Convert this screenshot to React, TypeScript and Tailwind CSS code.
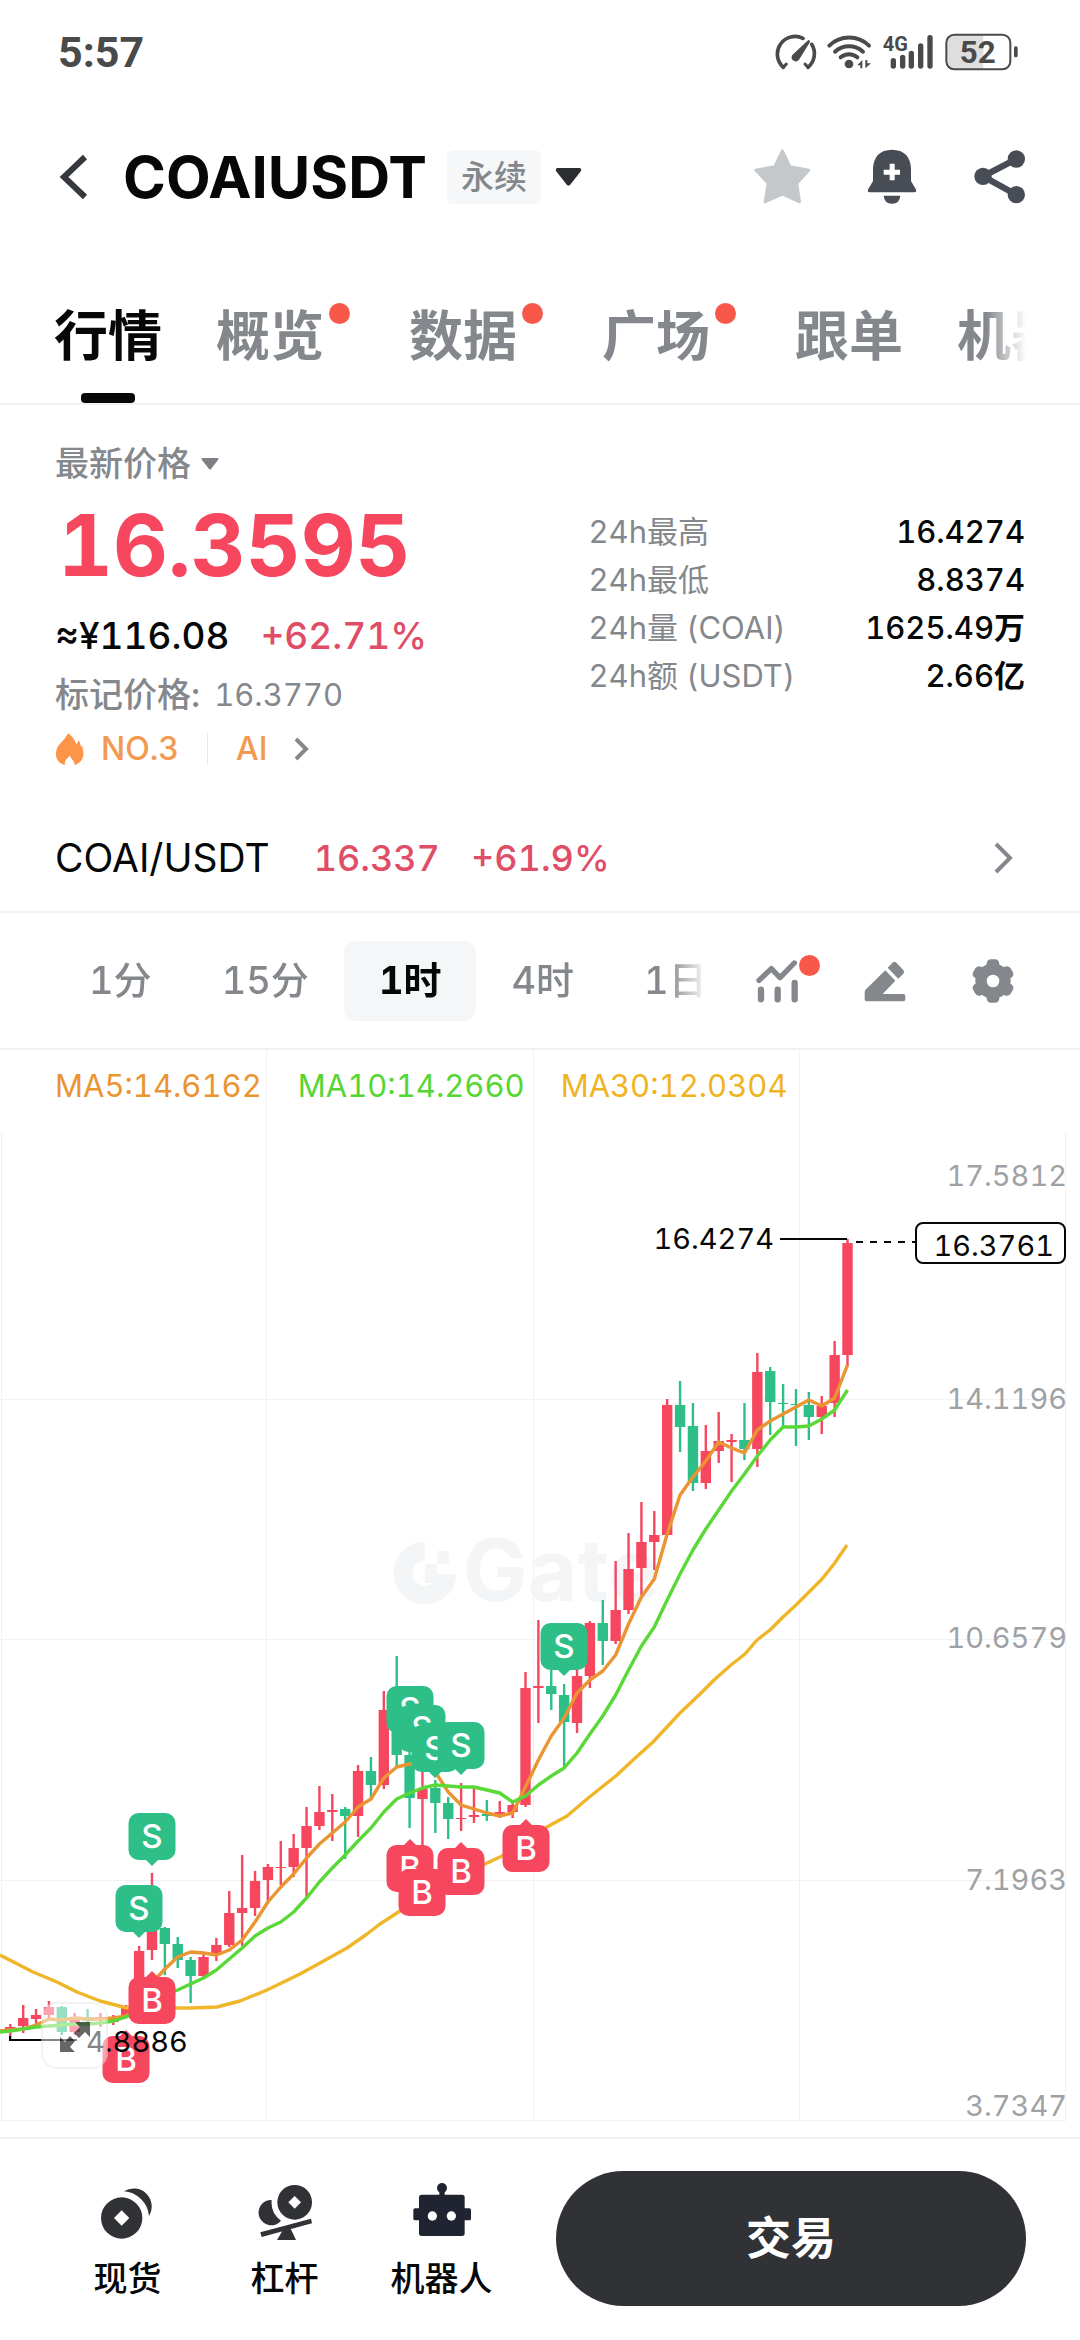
import { useState } from "react";
import clsx from "clsx";

const tabs = [
  { label: "行情", dot: false },
  { label: "概览", dot: true },
  { label: "数据", dot: true },
  { label: "广场", dot: true },
  { label: "跟单", dot: false },
  { label: "机器人", dot: false },
];

const stats = [
  { label: "24h最高", value: "16.4274", unit: "" },
  { label: "24h最低", value: "8.8374", unit: "" },
  { label: "24h量 (COAI)", value: "1625.49", unit: "万" },
  { label: "24h额 (USDT)", value: "2.66", unit: "亿" },
];

const intervals = ["1分", "15分", "1时", "4时", "1日"];

const UP = "#f6475e";
const DOWN = "#2dbf87";

// [up, high, body top, body bottom, low] in chart units
const candles: [number, number, number, number, number][] = [
  [1, 974, 977, 979, 989], [1, 955, 968, 976, 983], [1, 959, 965, 969, 974], [1, 951, 957, 965, 969],
  [0, 956, 957, 982, 985], [1, 963, 967, 982, 985], [0, 959, 967, 971, 975], [1, 963, 967, 969, 977],
  [1, 965, 967, 972, 975], [1, 955, 958, 967, 968], [1, 896, 901, 943, 947], [1, 823, 877, 900, 910],
  [0, 877, 878, 894, 925], [0, 887, 894, 910, 918], [0, 907, 910, 926, 953], [1, 904, 907, 926, 927],
  [1, 888, 895, 905, 911], [1, 841, 863, 895, 897], [1, 805, 858, 863, 896], [1, 821, 831, 858, 866],
  [1, 814, 817, 830, 851], [1, 791, 817, 818, 835], [1, 784, 798, 817, 827], [1, 757, 776, 798, 847],
  [1, 736, 762, 776, 780], [1, 744, 760, 762, 791], [0, 757, 759, 766, 809], [1, 715, 721, 766, 787],
  [0, 707, 721, 735, 748], [1, 641, 660, 735, 739], [0, 606, 643, 705, 717], [0, 700, 705, 748, 778],
  [1, 720, 739, 749, 797], [0, 730, 738, 753, 783], [0, 747, 753, 769, 789], [1, 733, 768, 769, 781],
  [1, 737, 765, 767, 773], [0, 750, 764, 766, 771], [1, 751, 762, 764, 768], [1, 752, 755, 762, 768],
  [1, 622, 638, 755, 757], [1, 570, 636, 638, 673], [0, 617, 636, 644, 660], [0, 634, 645, 672, 717],
  [1, 617, 626, 673, 683], [1, 571, 573, 626, 638], [0, 550, 573, 591, 615], [1, 511, 560, 591, 594],
  [1, 483, 519, 560, 564], [1, 452, 492, 518, 545], [1, 461, 485, 492, 520], [1, 349, 355, 485, 485],
  [0, 331, 355, 377, 402], [0, 353, 376, 433, 441], [1, 375, 401, 433, 439], [1, 362, 391, 401, 413],
  [1, 384, 390, 392, 432], [0, 353, 390, 399, 410], [1, 303, 322, 399, 417], [0, 317, 321, 352, 385],
  [0, 334, 353, 354, 377], [0, 339, 354, 355, 396], [0, 342, 355, 367, 390], [1, 346, 356, 367, 384],
  [1, 291, 305, 353, 367], [1, 189, 193, 305, 316],
];

const ma5 = [
  980, 979, 975, 969, 970, 968, 969, 969, 968, 966, 957, 933, 919, 907, 902, 903, 905, 900, 890, 872, 852, 837,
  824, 808, 794, 783, 772, 757, 749, 728, 717, 714, 713, 722, 742, 755, 759, 763, 766, 763, 737, 710, 686, 668,
  643, 630, 621, 605, 574, 547, 529, 484, 445, 427, 411, 392, 398, 403, 380, 371, 364, 357, 350, 356, 348, 315,
];

const ma10 = [
  981, 979, 977, 976, 975, 974, 974, 973, 971, 967, 960, 952, 945, 940, 934, 928, 920, 909, 898, 886, 878, 872,
  862, 848, 832, 818, 805, 791, 778, 762, 749, 743, 738, 735, 736, 737, 737, 740, 743, 752, 746, 735, 726, 718,
  703, 684, 666, 645, 620, 596, 577, 550, 524, 500, 479, 460, 441, 424, 406, 390, 377, 377, 376, 369, 360, 340,
];

const ma30 =
  "0,905 33,922 57,932 77,942 100,951 127,958 150,959 177,958 191,958 217,957 240,951 267,940 300,924 320,913 347,898 367,884 380,874 400,861 440,838 485,814 502,806 547,777 567,766 587,749 617,725 633,710 653,692 680,663 700,644 714,630 731,615 745,604 757,590 770,580 783,567 796,555 809,542 822,529 834,514 847,495";

const marks = [
  { side: "S", x: 152, y: 763 },
  { side: "S", x: 139, y: 835 },
  { side: "S", x: 410, y: 636 },
  { side: "S", x: 422, y: 655 },
  { side: "S", x: 435, y: 675 },
  { side: "S", x: 461, y: 672 },
  { side: "S", x: 564, y: 573 },
  { side: "B", x: 152, y: 927 },
  { side: "B", x: 126, y: 986 },
  { side: "B", x: 410, y: 795 },
  { side: "B", x: 461, y: 798 },
  { side: "B", x: 422, y: 819 },
  { side: "B", x: 526, y: 775 },
];

const priceAxis = [
  { label: "17.5812", y: 136 },
  { label: "14.1196", y: 359 },
  { label: "10.6579", y: 598 },
  { label: "7.1963", y: 840 },
  { label: "3.7347", y: 1066 },
];

const candleX = (i: number) => 10.3 + i * 12.88;
const toPoints = (values: number[]) => values.map((y, i) => `${candleX(i)},${y}`).join(" ");

function StatusBar() {
  return (
    <div className="flex h-[104px] items-center justify-between pl-[58px] pr-[60px] text-[#4a4a4a]">
      <span className="font-['Roboto',sans-serif] text-[43px] font-bold leading-[44px]">5:57</span>
      <svg className="h-[40px] w-[245px]" viewBox="45 62 735 120" fill="none" stroke="currentColor" strokeLinecap="round">
        <path d="M70 168 A53 53 0 0 1 129 81" strokeWidth="11" />
        <path d="M155 99 A53 53 0 0 1 144 168" strokeWidth="11" />
        <path d="M70 168 L79 158 M144 168 L135 158" strokeWidth="9" />
        <path d="M97 131 L145 86 Q151 86 150 92 L118 144 A12 12 0 1 1 97 131Z" fill="currentColor" stroke="none" />
        <path d="M208 103 A85 85 0 0 1 327 103 M225 121 A62 62 0 0 1 309 121 M242 138 A38 38 0 0 1 292 138" strokeWidth="12" />
        <circle cx="267" cy="158" r="13" fill="currentColor" stroke="none" />
        <path d="M292 162 L307 146 V171 H301 V162Z M316 171 V146 H322 V156 H333Z" fill="currentColor" stroke="none" />
        <path d="M400 148 V164 M428 138 V164 M454 126 V164 M482 104 V164 M510 79 V164" strokeWidth="16" />
        <text x="368" y="120" fill="currentColor" stroke="none" className="font-['Roboto',sans-serif] text-[60px] font-bold">4G</text>
        <path d="M582 70 H670 V174 H582 Q559 174 559 150 V94 Q559 70 582 70Z" fill="#dedede" stroke="none" />
        <rect x="559" y="70" width="192" height="104" rx="24" strokeWidth="6" />
        <rect x="762" y="105" width="11" height="33" rx="5" fill="currentColor" stroke="none" />
        <text x="653" y="155" textAnchor="middle" fill="currentColor" stroke="none" className="font-['Roboto',sans-serif] text-[94px] font-bold">52</text>
      </svg>
    </div>
  );
}

function Header() {
  return (
    <header className="flex h-[146px] items-center justify-between pl-[55px] pr-[54px]">
      <div className="flex items-center">
        <button aria-label="返回" className="mr-[32px]">
          <svg className="h-[46px] w-[36px]" viewBox="0 0 36 46" fill="none" stroke="#35383c" strokeWidth="6">
            <path d="M30 3 L9 23 L30 43" />
          </svg>
        </button>
        <button className="flex items-center text-[#060808]">
          <h1 className="text-[58px] font-bold leading-[64px]">COAIUSDT</h1>
          <span className="ml-[20px] rounded-md bg-[#f5f7f9] px-[14px] text-[33px] font-medium leading-[54px] text-[#84888c]">
            永续
          </span>
          <svg className="ml-[14px] h-[18px] w-[27px]" viewBox="0 0 27 18" fill="#2b2d30">
            <path d="M2 0 H25 Q27 1 26 3 L15 17 Q13.500 18 12 17 L1 3 Q0 1 2 0Z" />
          </svg>
        </button>
      </div>
      <div className="flex items-center gap-[55px]">
        <button aria-label="收藏">
          <svg className="h-[56px] w-[57px]" viewBox="-25 416 171 168" fill="#c4c8ca" stroke="#c4c8ca" strokeWidth="8" strokeLinejoin="round">
            <path d="M60 421 L83 469 L140 479 L104 519 L112 575 L60 552 L8 575 L17 519 L-20 479 L37 469Z" />
          </svg>
        </button>
        <button aria-label="提醒">
          <svg className="h-[56px] w-[52px]" viewBox="309 416 156 168" fill="#474c55">
            <path d="M330 476 Q332 419 387 418 Q442 419 444 476 V512 L460 540 Q460 546 455 546 H319 Q314 546 314 540 L330 512Z" />
            <path d="M362 556 H412 Q410 580 387 580 Q364 580 362 556Z" />
            <path d="M362 478 H380 V460 H395 V478 H411 V493 H395 V510 H380 V493 H362Z" fill="#fff" />
          </svg>
        </button>
        <button aria-label="分享">
          <svg className="h-[56px] w-[53px]" viewBox="634 416 159 168" fill="#474c55" stroke="#474c55">
            <path d="M764 446 L664 498 L764 553" fill="none" strokeWidth="19" />
            <circle cx="764" cy="446" r="26" stroke="none" />
            <circle cx="664" cy="498" r="26" stroke="none" />
            <circle cx="764" cy="553" r="26" stroke="none" />
          </svg>
        </button>
      </div>
    </header>
  );
}

function Tabs() {
  const [active, setActive] = useState("行情");

  return (
    <nav className="border-b-2 border-[#f1f2f4] px-[54px]">
      <div className="flex gap-[54px] overflow-hidden [mask-image:linear-gradient(to_right,black_calc(100%-40px),transparent)]">
        {tabs.map((tab) => (
          <button
            key={tab.label}
            onClick={() => setActive(tab.label)}
            className={clsx(
              "relative h-[153px] shrink-0 pt-[20px] text-[54px] font-bold leading-[60px]",
              tab.dot && "pr-[31px]",
              active === tab.label ? "text-[#060808]" : "text-[#84888c]"
            )}
          >
            {tab.label}
            {tab.dot && <span className="absolute right-[5px] top-[53px] size-[21px] rounded-full bg-[#f8584a]" />}
            {active === tab.label && (
              <span className="absolute bottom-0 left-1/2 h-[10px] w-[54px] -translate-x-1/2 rounded-sm bg-[#060808]" />
            )}
          </button>
        ))}
      </div>
    </nav>
  );
}

function PriceSummary() {
  return (
    <section className="flex justify-between px-[55px] pb-[40px] pt-[39px]">
      <div>
        <button className="flex items-center gap-[10px] text-[34px] font-medium leading-[40px] text-[#84888c]">
          最新价格
          <svg className="h-[12px] w-[18px]" viewBox="0 0 18 12" fill="#7c8084">
            <path d="M1 0 H17 Q18 1 17 2 L10 11 Q9 12 8 11 L1 2 Q0 1 1 0Z" />
          </svg>
        </button>
        <div className="mt-[18px] pl-[3px] text-[85px] font-bold leading-[88px] text-[#f6475e]">16.3595</div>
        <div className="mt-[24px] flex gap-[31px] text-[37px] font-medium leading-[44px]">
          <span className="text-[#060808]">≈¥116.08</span>
          <span className="text-[#e04d67]">+62.71%</span>
        </div>
        <div className="mt-[17px] flex gap-[14px] text-[#84888c]">
          <span className="text-[34px] font-medium leading-[40px]">标记价格:</span>
          <span className="text-[31px] leading-[40px]">16.3770</span>
        </div>
        <button className="mt-[18px] flex items-center text-[32px] font-medium leading-[32px] text-[#f39a50]">
          <svg className="h-[32px] w-[30px]" viewBox="49 275 90 97" fill="#fd9548">
            <path d="M88 276 C99 284 108 293 113 309 Q118 305 119 298 Q127 303 126 315 L131 315 C138 337 137 362 108 372 C107 358 98 355 94 344 C86 351 78 357 78 372 C56 366 47 346 53 327 C58 307 76 301 88 276Z" />
          </svg>
          <span className="ml-[16px]">NO.3</span>
          <span className="ml-[28px] h-[32px] w-px bg-[#e6e8ea]" />
          <span className="ml-[28px]">AI</span>
          <svg className="ml-[26px] h-[24px] w-[17px]" viewBox="0 0 17 24" fill="none" stroke="#84888c" strokeWidth="4">
            <path d="M3 2 L13 12 L3 22" />
          </svg>
        </button>
      </div>
      <dl className="mt-[64px] w-[45%] text-[31px] leading-[48px]">
        {stats.map((item) => (
          <div key={item.label} className="flex h-[48px] justify-between">
            <dt className="text-[#84888c]">{item.label}</dt>
            <dd className="font-medium text-[#060808]">
              {item.value}
              <span className="font-bold">{item.unit}</span>
            </dd>
          </div>
        ))}
      </dl>
    </section>
  );
}

function SpotLink() {
  return (
    <a href="#spot" className="flex h-[108px] items-center border-b-2 border-[#f1f2f4] pl-[55px] pr-[66px] text-[36px] font-medium leading-[44px]">
      <span className="text-[39px] font-normal text-[#060808]">COAI/USDT</span>
      <span className="ml-[44px] text-[#e04d67]">16.337</span>
      <span className="ml-[31px] text-[#e04d67]">+61.9%</span>
      <svg className="ml-auto h-[32px] w-[22px]" viewBox="0 0 22 32" fill="none" stroke="#84888c" strokeWidth="4">
        <path d="M4 2 L18 16 L4 30" />
      </svg>
    </a>
  );
}

function IntervalBar() {
  const [interval, setInterval] = useState("1时");

  return (
    <div className="flex h-[137px] items-center border-b-2 border-[#f1f2f4] pl-[54px] pr-[66px]">
      <div className="flex min-w-0 flex-1 overflow-hidden [mask-image:linear-gradient(to_right,black_calc(100%-40px),transparent)]">
        {intervals.map((item) => (
          <button
            key={item}
            onClick={() => setInterval(item)}
            className={clsx(
              "h-[80px] shrink-0 rounded-xl px-[35px] text-[38px]",
              interval === item ? "bg-[#f4f6f8] font-bold text-[#060808]" : "font-medium text-[#84888c]"
            )}
          >
            {item}
          </button>
        ))}
      </div>
      <div className="ml-[48px] flex items-center gap-[66px]">
        <button aria-label="指标" className="relative">
          <svg className="h-[44px] w-[42px]" viewBox="40 86 126 132" fill="none" stroke="#84888c">
            <path d="M49 150 L86 115 L112 142 L155 98" strokeWidth="16" strokeLinecap="round" strokeLinejoin="round" />
            <path d="M55 178 V207 M105 178 V207 M156 158 V207" strokeWidth="19" strokeLinecap="round" />
          </svg>
          <span className="absolute -right-[22px] -top-[4px] size-[21px] rounded-full bg-[#f8584a]" />
        </button>
        <button aria-label="画线">
          <svg className="h-[44px] w-[42px]" viewBox="366 86 126 132" fill="#84888c">
            <path d="M430 120 L460 151 L422 191 H484 Q490 191 490 197 V207 Q490 213 484 213 H374 Q368 213 368 207 V185 Q368 180 372 177Z" />
            <path d="M437 112 L453 96 Q458 92 463 97 L484 119 Q489 125 484 130 L469 145Z" />
          </svg>
        </button>
        <button aria-label="设置">
          <svg className="h-[44px] w-[42px]" viewBox="693 86 126 132" fill="#84888c">
            <circle cx="756" cy="152" r="53" />
            <rect x="737" y="87" width="38" height="130" rx="13" />
            <rect x="737" y="87" width="38" height="130" rx="13" transform="rotate(60 756 152)" />
            <rect x="737" y="87" width="38" height="130" rx="13" transform="rotate(120 756 152)" />
            <circle cx="756" cy="152" r="19" fill="#fff" />
          </svg>
        </button>
      </div>
    </div>
  );
}

function TradeMark({ side, x, y }: { side: string; x: number; y: number }) {
  const sell = side === "S";
  return (
    <g fill={sell ? DOWN : UP}>
      <rect x={x - 23.5} y={y} width="47" height="47" rx="10" />
      <path
        d={sell ? `M${x - 7} ${y + 46} L${x} ${y + 53} L${x + 7} ${y + 46}Z` : `M${x - 7} ${y + 1} L${x} ${y - 6} L${x + 7} ${y + 1}Z`}
      />
      <text x={x} y={y + 35} textAnchor="middle" fill="#fff" className="text-[33px] font-medium">
        {side}
      </text>
    </g>
  );
}

function KlineChart() {
  return (
    <section className="relative pb-[15px]">
      <div className="absolute left-0 top-[16px] flex gap-[36px] pl-[55px] text-[31px] leading-[40px]">
        <span className="text-[#ea9432]">MA5:14.6162</span>
        <span className="text-[#56d634]">MA10:14.2660</span>
        <span className="text-[#efb41f]">MA30:12.0304</span>
      </div>
      <svg className="block w-full text-[29px]" viewBox="0 0 1080 1072">
        <g stroke="#f1f2f3" strokeWidth="1">
          <path d="M1.500 82 V1070 M266.500 0 V1070 M533.500 0 V1070 M799.500 0 V1070 M1065.500 82 V1070" />
          <path d="M0 349.500 H1066 M0 589.500 H1066 M0 830.500 H1066 M0 1070.500 H1066" />
        </g>

        {/* watermark */}
        <g fill="#f3f5f6">
          <path d="M425 501 A22 22 0 1 0 447 524" fill="none" stroke="#f3f5f6" strokeWidth="19" />
          <path d="M425 514 H437 V533 H425Z M437 501 H449 V514 H437Z" />
          <text x="463" y="551" className="text-[86px] font-bold">Gate</text>
        </g>

        {candles.map(([up, high, top, bottom, low], i) => (
          <g key={i} fill={up ? UP : DOWN}>
            <rect x={candleX(i) - 1.2} y={high} width="2.4" height={low - high} />
            <rect x={candleX(i) - 5.2} y={top} width="10.400" height={Math.max(bottom - top, 1)} />
          </g>
        ))}

        <g fill="none" strokeWidth="3.4" strokeLinejoin="round">
          <polyline points={ma30} stroke="#efb62a" />
          <polyline points={`0,981 ${toPoints(ma5)}`} stroke="#ea9432" />
          <polyline points={`0,982 ${toPoints(ma10)}`} stroke="#5ad838" />
        </g>

        {marks.map((mark, i) => (
          <TradeMark key={i} {...mark} />
        ))}

        <g fill="#9fa2a5" textAnchor="end">
          {priceAxis.map((tick) => (
            <text key={tick.label} x="1067" y={tick.y}>{tick.label}</text>
          ))}
        </g>

        <g stroke="#060808" strokeWidth="2" fill="none">
          <path d="M780 189 H847 M10 986 V990 H77" />
          <path d="M856 192 H915" strokeDasharray="7 7" />
          <rect x="916" y="173" width="149" height="40" rx="7" fill="#fff" />
        </g>
        <g fill="#060808">
          <text x="774" y="199" textAnchor="end">16.4274</text>
          <text x="1054" y="206" textAnchor="end">16.3761</text>
          <text x="86" y="1002">4.8886</text>
        </g>
      </svg>
      <button
        aria-label="全屏"
        className="absolute bottom-[68px] left-[41px] size-[67px] rounded-2xl border-2 border-black/5 bg-white/50"
      >
        <svg className="mx-auto size-[34px]" viewBox="0 0 34 34" fill="#000" fillOpacity="0.6">
          <path d="M17 3 H32 V18 L27 13 L21 19 L16 14 L22 8Z" />
          <path d="M2 18 L7 23 L12 17 L17 22 L12 28 L17 33 H2Z" />
        </svg>
      </button>
    </section>
  );
}

function BottomBar() {
  return (
    <footer className="flex h-[203px] items-start border-t-2 border-[#f1f2f4] pl-[49px] pr-[54px] text-[34px] font-medium leading-[40px] text-[#060808]">
      <a href="#spot" className="flex w-[157px] flex-col items-center gap-[18px] pt-[44px]">
        <svg className="h-[58px] w-[58px]" viewBox="58 99 174 174" fill="#303235">
          <circle cx="126" cy="204" r="62" />
          <path d="M126 181 L149 204 L126 227 L103 204Z" fill="#fff" />
          <path d="M133 124 A54 54 0 0 1 208 198 A82 82 0 0 0 133 124Z" />
        </svg>
        现货
      </a>
      <a href="#margin" className="flex w-[157px] flex-col items-center gap-[18px] pt-[44px]">
        <svg className="h-[58px] w-[58px]" viewBox="525 99 174 174" fill="#303235">
          <circle cx="641" cy="157" r="52" />
          <path d="M641 138 L660 157 L641 176 L622 157Z" fill="#fff" />
          <path d="M572 150 A38 38 0 1 0 600 212 A68 68 0 0 1 572 150Z" />
          <path d="M538 247 L690 206 L693 220 L542 261Z M604 243 L629 236 L645 270 H588Z" />
        </svg>
        杠杆
      </a>
      <a href="#bots" className="flex w-[157px] flex-col items-center gap-[18px] pt-[44px]">
        <svg className="h-[58px] w-[58px]" viewBox="993 97 174 174" fill="#202431">
          <circle cx="1080" cy="112" r="15" />
          <rect x="1072" y="115" width="16" height="25" />
          <rect x="1011" y="132" width="137" height="124" rx="8" />
          <rect x="994" y="173" width="173" height="36" rx="5" />
          <circle cx="1051" cy="196" r="14" fill="#fff" />
          <circle cx="1108" cy="196" r="14" fill="#fff" />
        </svg>
        机器人
      </a>
      <button className="ml-[36px] mt-[32px] h-[135px] flex-1 rounded-full bg-[#303235] text-[45px] font-bold text-white">
        交易
      </button>
    </footer>
  );
}

export default function App() {
  return (
    <main className="min-h-screen bg-white font-['Inter','Noto_Sans_CJK_SC',sans-serif] tabular-nums">
      <StatusBar />
      <Header />
      <Tabs />
      <PriceSummary />
      <SpotLink />
      <IntervalBar />
      <KlineChart />
      <BottomBar />
    </main>
  );
}
